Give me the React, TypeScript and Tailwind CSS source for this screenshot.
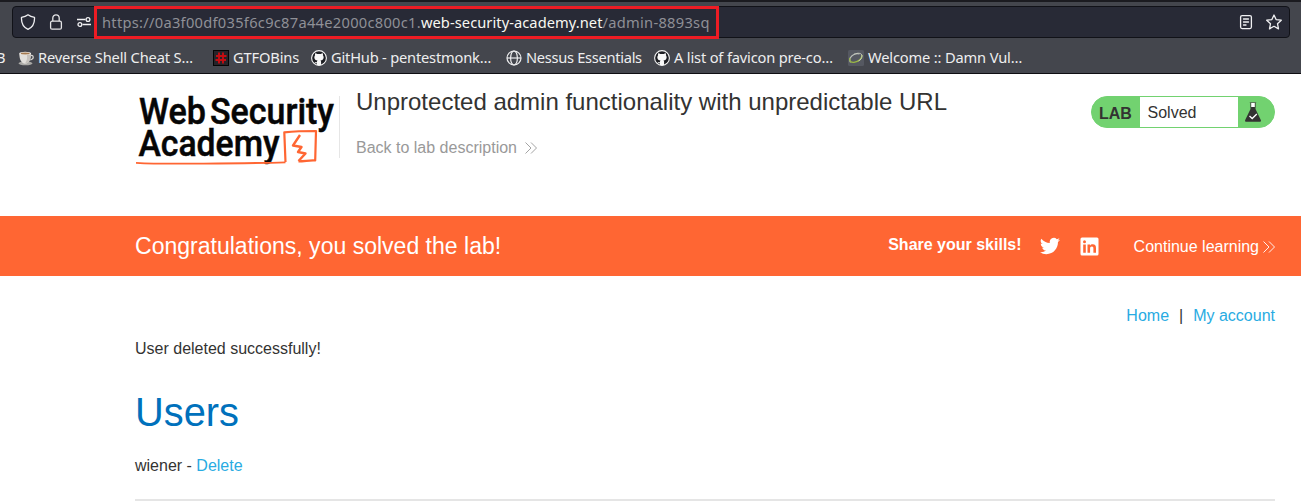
import React from "react";

const IconShield = () => (
  <svg className="h-4 w-4" viewBox="0 0 16 16" fill="none" stroke="#f0f0f2" strokeWidth="1.3" strokeLinejoin="round">
    <path d="M8 .8C6.2 2.2 4 3 1.5 3.4 1.2 8.800 3.200 13.200 8 15.400 12.800 13.200 14.800 8.800 14.500 3.400 12 3 9.800 2.200 8 .8Z" />
  </svg>
);

const IconLock = () => (
  <svg className="h-4 w-4" viewBox="0 0 16 16" fill="none" stroke="#e4e4e6" strokeWidth="1.3">
    <rect x="2.600" y="7.200" width="10.800" height="8" rx="1.500" />
    <path d="M4.800 7.200V4a3.200 3.200 0 0 1 6.400 0v3.200" />
  </svg>
);

const IconPermissions = () => (
  <svg className="h-4 w-4" viewBox="0 0 16 16" fill="none" stroke="#f0f0f2" strokeWidth="1.3">
    <path d="M1 5.500h8.500M6.500 10.500H15" />
    <circle cx="12" cy="5.500" r="1.900" />
    <circle cx="3.900" cy="10.500" r="1.900" />
  </svg>
);

const IconReader = () => (
  <svg className="h-4 w-4" viewBox="0 0 16 16" fill="none" stroke="#f0f0f2" strokeWidth="1.300" strokeLinecap="round">
    <rect x="2.600" y="1.600" width="10.800" height="13" rx="1.500" />
    <path d="M5.500 5h5M5.500 8h5M5.500 11h2.500" />
  </svg>
);

const IconStar = () => (
  <svg className="h-4 w-4" viewBox="0 0 16 16" fill="none" stroke="#f0f0f2" strokeWidth="1.3" strokeLinejoin="round">
    <path d="m8 1 2.100 4.600 5.200.6-3.800 3.500 1 5.200L8 12.300l-4.500 2.600 1-5.200L.7 6.200l5.200-.6Z" />
  </svg>
);

const IconCup = () => (
  <svg className="h-4 w-4" viewBox="0 0 16 16">
    <ellipse cx="7.500" cy="13.300" rx="7" ry="2" fill="#aaa9a6" />
    <path d="M12 5.500c4-1 4.500 3.500.2 4.500" fill="none" stroke="#d8d6d2" strokeWidth="1.200" />
    <path d="M1.300 3.500c0 5 1.700 10.200 5.900 10.200s5.800-5.200 5.800-10.200Z" fill="#e1dfdb" />
    <path d="M9 5c.5 3-.2 6-2 8.600 4.200 0 6-5 6-10.100Z" fill="#c5c1bc" />
    <ellipse cx="7.200" cy="3.400" rx="5.900" ry="1.700" fill="#f0eeea" />
    <ellipse cx="7.200" cy="3.500" rx="4.500" ry=".9" fill="#a47a50" />
  </svg>
);

const IconHash = () => (
  <svg className="h-4 w-4" viewBox="0 0 16 16">
    <rect width="16" height="16" fill="#050505" />
    <rect x="1" y="1" width="14" height="14" fill="#262329" />
    <path d="M6 2.500v11M10 2.500v11M3 6h10.500M2.500 10h10.500" stroke="#c50d12" strokeWidth="1.900" />
  </svg>
);

const IconGlobe = () => (
  <svg className="h-4 w-4" viewBox="0 0 16 16" fill="none" stroke="#ededee" strokeWidth="1.200">
    <circle cx="8" cy="8" r="7" />
    <ellipse cx="8" cy="8" rx="3.400" ry="7" />
    <path d="M1 8h14" />
  </svg>
);

const IconCat = () => (
  <svg className="h-4 w-4" viewBox="0 0 16 16">
    <circle cx="8" cy="8" r="7.400" fill="#1d1e23" stroke="#f5f5f5" strokeWidth="1.100" />
    <path
      d="M4.200 3.300c.8 0 1.500.4 2 .8a8 8 0 0 1 3.600 0c.5-.4 1.200-.8 2-.8.3.7.3 1.400.1 1.900 1.500 2 .7 5-2.400 5.300.5.5.6 1 .6 1.700v2.700a7.400 7.400 0 0 1-4.200 0v-1.700c-1.500.3-2-.4-2.400-1.300.8.1 1.200.6 2.400.4 0-.8.2-1.400.6-1.800-3.100-.3-3.900-3.300-2.400-5.300-.2-.5-.2-1.200.1-1.900Z"
      fill="#f8f8f8"
    />
  </svg>
);

const IconSwirl = () => (
  <svg className="h-4 w-4" viewBox="0 0 16 16" fill="none">
    <rect width="16" height="16" rx="1.500" fill="#555861" />
    <path d="M2.500 12.500C-.2 8 5.500 2.500 11.500 4" stroke="#b9bdb9" strokeWidth="1.100" />
    <path d="M2 8c-1 3 .5 4.500 4 4.300 5-.4 8-3.800 8-7.300" stroke="#9ab844" strokeWidth="1.300" />
    <path d="M6 4.300C10 2.500 14 3 14 6c0 2-1.500 4-3.500 5" stroke="#c7ccbf" strokeWidth="1" />
  </svg>
);

const bookmarks = [
  { label: "Reverse Shell Cheat S…", icon: <IconCup />, style: "w-[195px] tracking-[-0.15px]" },
  { label: "GTFOBins", icon: <IconHash />, style: "w-[98px] tracking-[-0.15px]" },
  { label: "GitHub - pentestmonk…", icon: <IconCat />, style: "w-[195px] tracking-[-0.2px]" },
  { label: "Nessus Essentials", icon: <IconGlobe />, style: "w-[148px] tracking-[-0.3px]" },
  { label: "A list of favicon pre-co…", icon: <IconCat />, style: "w-[194px] tracking-[-0.17px]" },
  { label: "Welcome :: Damn Vul…", icon: <IconSwirl />, style: "w-[180px] tracking-[-0.16px]" },
];

function BrowserBar() {
  return (
    <header className="flex h-[74px] flex-col border-t-2 border-b border-t-[#1b1b20] border-b-[#0e0e12] bg-[#44464d] font-['Noto_Sans',sans-serif] text-[14.67px]">
      <div className="mt-1 mr-[11px] ml-3 flex h-8 shrink-0 items-center rounded-[4px] border border-[#111218] bg-[#282a36]">
        <div className="ml-[7px] flex w-[74px] shrink-0 items-center gap-3">
          <IconShield />
          <IconLock />
          <IconPermissions />
        </div>
        <div className="flex h-[33px] w-[625px] shrink-0 items-center border-3 border-[#ed1c24] pl-[5px] whitespace-nowrap text-[#8f9096]">
          <span className="tracking-[0.28px]">https://0a3f00df035f6c9c87a44e2000c800c1.</span>
          <span className="tracking-[0.06px] text-[#f8f8f2]">web-security-academy.net</span>
          <span className="tracking-[0.28px]">/admin-8893sq</span>
        </div>
        <div className="mr-[7px] ml-auto flex gap-3">
          <IconReader />
          <IconStar />
        </div>
      </div>
      <nav className="mt-[4px] flex h-8 items-center overflow-hidden whitespace-nowrap text-[#eeeeef]">
        <span className="-ml-[4px] w-[22px] shrink-0 pb-0.5">B</span>
        {bookmarks.map((b) => (
          <div key={b.label} className={`flex shrink-0 items-center gap-1 ${b.style}`}>
            <span className="shrink-0">{b.icon}</span>
            <span className="pb-0.5">{b.label}</span>
          </div>
        ))}
      </nav>
    </header>
  );
}

const Logo = () => (
  <svg className="h-[80px] w-[204px] shrink-0" viewBox="0 0 204 80">
    <g fill="#060606" stroke="#060606" strokeWidth=".5" fontFamily="Roboto, sans-serif" fontWeight="500" fontSize="37">
      <text x="4" y="34.800" textLength="67" lengthAdjust="spacingAndGlyphs">Web</text>
      <text x="75" y="34.800" textLength="124" lengthAdjust="spacingAndGlyphs">Security</text>
      <text x="3.500" y="67.300" textLength="141" lengthAdjust="spacingAndGlyphs">Academy</text>
    </g>
    <g fill="none" stroke="#ff6633" strokeLinejoin="round">
      <path d="M1 73.800c20 1.200 41 1 60 .8 30-.2 57-.3 89.500-1.300" strokeWidth="1.800" />
      <path d="M150.500 73 149.300 43.400C160 42.300 169 42 181 42L180.200 71.500C175 71 170 72.300 163.500 72.300" strokeWidth="2.200" />
      <path d="m165 46-7 10.500 8.500 1.500-3.500 5 7.500 1.500-7 7.500" strokeWidth="2.400" />
    </g>
  </svg>
);

const Chevrons = () => (
  <svg className="h-3 w-3 shrink-0" viewBox="0 0 12 12" fill="none" stroke="currentColor" strokeWidth=".9">
    <path d="m.5.500 5.500 5.500L.5 11.500M6 .5 11.500 6 6 11.500" />
  </svg>
);

const Flask = () => (
  <svg className="h-5 w-4" viewBox="0 0 16 20">
    <path d="M5.500 1v6L.2 18c-.4 1 .1 1.700 1 1.700h13.600c.9 0 1.400-.7 1-1.700L10.500 7V1Z" fill="#333332" />
    <path d="M6 .8h4V5H6Z" fill="#fff" />
    <path d="M4.800.5h6.400M5.800 1v5M10.200 1v5" stroke="#4d654a" strokeWidth=".8" />
    <path d="m4.500 14 2.700 2.500 4.600-4.500" fill="none" stroke="#fff" strokeWidth="1.300" />
  </svg>
);

const Twitter = () => (
  <svg className="h-5 w-5" viewBox="0 0 24 24" fill="#fff">
    <path d="M23.950 4.570a10 10 0 0 1-2.820.77 4.960 4.960 0 0 0 2.160-2.720c-.95.550-2 .950-3.130 1.180a4.920 4.920 0 0 0-8.380 4.480C7.690 8.090 4.070 6.130 1.640 3.160a4.920 4.920 0 0 0 1.520 6.570 4.900 4.900 0 0 1-2.230-.61v.060c0 2.380 1.700 4.370 3.950 4.820a5 5 0 0 1-2.210.080 4.940 4.940 0 0 0 4.600 3.420A9.870 9.870 0 0 1 0 19.540a14 14 0 0 0 7.550 2.210c9.050 0 14-7.500 14-13.980 0-.21 0-.42-.020-.63a10 10 0 0 0 2.460-2.550Z" />
  </svg>
);

const LinkedIn = () => (
  <svg className="h-[19px] w-[19px]" viewBox="0 0 19 19">
    <rect x=".5" y=".5" width="18" height="18" rx="1.500" fill="#fff" />
    <circle cx="4.500" cy="4.700" r="1.500" fill="#ff6633" />
    <path d="M3.200 7.500h2.600v8.300H3.200ZM7.500 7.500H10v1.200c.5-.9 1.500-1.400 2.700-1.400 2.500 0 3.300 1.500 3.300 3.900v4.600h-2.600v-4.200c0-1.300-.3-2.100-1.500-2.100-1.300 0-1.800.9-1.800 2.100v4.200H7.500Z" fill="#ff6633" />
  </svg>
);

export default function App() {
  return (
    <div className="h-[502px] w-[1301px] overflow-hidden bg-white font-['Liberation_Sans',Arial,sans-serif] text-base leading-5 text-[#333332]">
      <BrowserBar />

      <section className="flex h-[142px] items-start pt-[15px] pr-[26px] pl-[135px]">
        <Logo />
        <div className="mt-[7px] h-[62px] w-px bg-[#e6e6e6]" />
        <div className="ml-4">
          <h1 className="-mt-[1px] text-2xl leading-[28px] whitespace-nowrap">
            Unprotected admin functionality with unpredictable URL
          </h1>
          <a className="mt-[22px] flex items-center gap-[8.5px] text-[#999]">
            Back to lab description
            <Chevrons />
          </a>
        </div>
        <div className="mt-[7px] ml-auto flex h-8 w-[184px] overflow-hidden rounded-full border border-[#72d270] bg-[#72d270]">
          <span className="w-12 pt-[7px] pl-[7px] font-bold">LAB</span>
          <span className="w-[98px] bg-white pt-[6px] pl-[7.5px]">Solved</span>
          <span className="pt-[5px] pl-[7px]">
            <Flask />
          </span>
        </div>
      </section>

      <section className="flex h-[60px] items-center bg-[#ff6633] pr-[26px] pl-[135px] text-white">
        <p className="text-[23.04px] leading-7">Congratulations, you solved the lab!</p>
        <div className="ml-auto flex items-center">
          <span className="mb-[3px] font-bold">Share your skills!</span>
          <span className="ml-[18px]"><Twitter /></span>
          <span className="ml-5"><LinkedIn /></span>
          <a className="ml-[35px] flex items-center gap-1 pt-px">
            Continue learning
            <Chevrons />
          </a>
        </div>
      </section>

      <main className="pr-[26px] pl-[135px]">
        <nav className="flex justify-end pt-[30px] text-[#29abe2]">
          <a>Home</a>
          <span className="mx-[10px] text-[#333332]">|</span>
          <a>My account</a>
        </nav>
        <p className="mt-[13px]">User deleted successfully!</p>
        <h2 className="mt-[29px] text-[39.8px] leading-[48px] text-[#0071bc]">Users</h2>
        <p className="mt-5">
          wiener - <a className="text-[#29abe2]">Delete</a>
        </p>
      </main>
      <hr className="mt-[23px] mr-[26px] ml-[135px] border-0 border-t-2 border-[#e5e5e5]" />
    </div>
  );
}
